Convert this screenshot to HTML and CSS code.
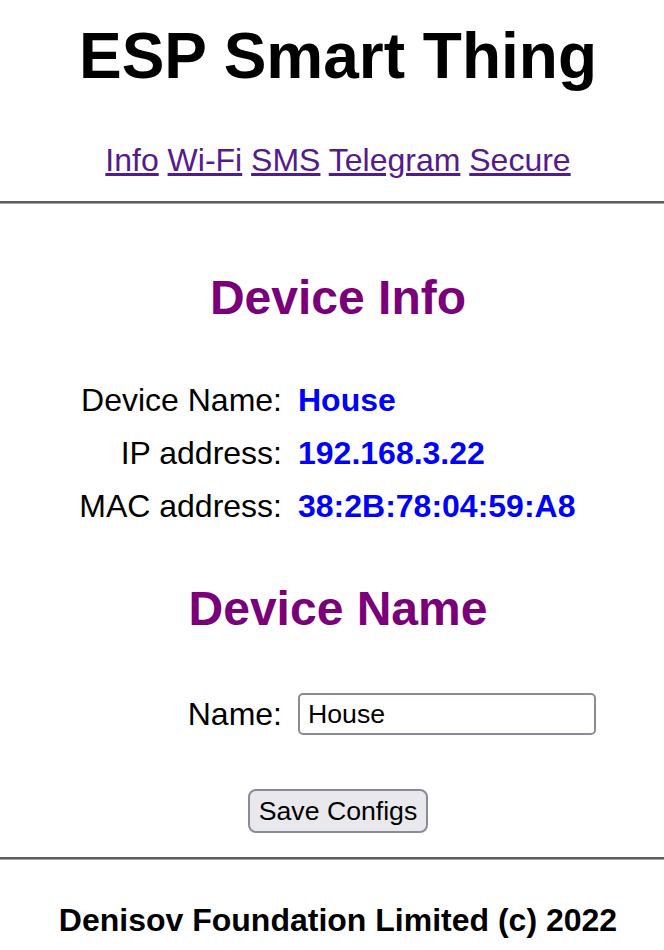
FILE: index.html
```
<!DOCTYPE html>
<html lang="en">
<head>
<meta charset="utf-8">
<title>ESP Smart Thing</title>
<link rel="stylesheet" href="styles.css">
</head>
<body>
<header class="top">
  <h1 class="title">ESP Smart Thing</h1>
  <nav class="nav"><a href="#info">Info</a> <a href="#wifi">Wi-Fi</a> <a href="#sms">SMS</a> <a href="#telegram">Telegram</a> <a href="#secure">Secure</a></nav>
</header>
<hr class="rule rule-top">
<main>
  <section class="block">
    <h2 class="heading heading-info">Device Info</h2>
    <div class="grid grid-info">
      <div class="label">Device Name:</div><div class="value">House</div>
      <div class="label">IP address:</div><div class="value">192.168.3.22</div>
      <div class="label">MAC address:</div><div class="value">38:2B:78:04:59:A8</div>
    </div>
  </section>
  <section class="block">
    <h2 class="heading heading-name">Device Name</h2>
    <form class="form" action="#" onsubmit="return false">
      <div class="grid grid-name">
        <label class="label" for="name">Name:</label><input class="field" id="name" type="text" value="House">
      </div>
      <div class="actions"><button class="btn" type="submit">Save Configs</button></div>
    </form>
  </section>
</main>
<hr class="rule rule-bottom">
<footer class="footer">Denisov Foundation Limited (c) 2022</footer>
</body>
</html>
```
FILE: styles.css
```
html, body {
  margin: 0;
  padding: 0;
  background: #ffffff;
}
body {
  font-family: "Liberation Sans", Arial, Helvetica, sans-serif;
  font-size: 32px;
  color: #000000;
  width: 664px;
  overflow: hidden;
}
.top {
  padding-top: 20px;
  padding-left: 12px;
  text-align: center;
}
.title {
  margin: 0;
  font-size: 64px;
  line-height: 72px;
  font-weight: bold;
}
.nav {
  margin-top: 48px;
  line-height: 40px;
}
.nav a {
  color: #551a8b;
  text-decoration: underline;
}
.rule {
  display: block;
  height: 0;
  margin: 0;
  border: 0;
  border-top: 2px solid #5c5c5c;
  border-bottom: 1px solid #a6a6a6;
}
.rule-top { margin-top: 21px; }
.rule-bottom { margin-top: 24px; }
.heading {
  margin: 0;
  padding-left: 12px;
  text-align: center;
  font-size: 48px;
  line-height: 56px;
  font-weight: bold;
  color: #7a007a;
}
.heading-info { margin-top: 66px; }
.heading-name { margin-top: 55px; }
.grid {
  display: grid;
  grid-template-columns: 282px 1fr;
  column-gap: 16px;
  align-items: center;
}
.grid-info {
  margin-top: 54px;
  row-gap: 13px;
}
.grid-name {
  margin-top: 56px;
}
.label {
  text-align: right;
  line-height: 40px;
  white-space: nowrap;
}
.value {
  line-height: 40px;
  font-weight: bold;
  color: #0000ff;
  white-space: nowrap;
}
.field {
  box-sizing: border-box;
  width: 298px;
  height: 42px;
  margin: 0;
  padding: 0 8px;
  border: 2px solid #8a8a98;
  border-radius: 5px;
  background: #ffffff;
  font-family: "Liberation Sans", Arial, Helvetica, sans-serif;
  font-size: 26.67px;
  color: #000000;
  outline: none;
}
.actions {
  margin-top: 54px;
  padding-left: 12px;
  text-align: center;
}
.btn {
  box-sizing: border-box;
  height: 44px;
  margin: 0;
  padding: 0 9px;
  border: 2px solid #8a8a98;
  border-radius: 8px;
  background: #e9e9ed;
  font-family: "Liberation Sans", Arial, Helvetica, sans-serif;
  font-size: 26.67px;
  color: #000000;
  cursor: pointer;
}
.footer {
  margin-top: 40px;
  padding-left: 12px;
  text-align: center;
  font-weight: bold;
  line-height: 40px;
}
```
